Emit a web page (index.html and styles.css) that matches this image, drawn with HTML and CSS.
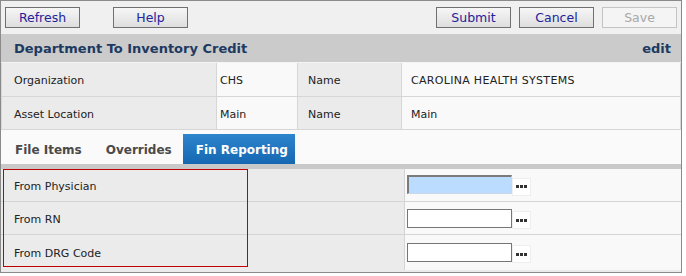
FILE: index.html
```html
<!DOCTYPE html>
<html>
	<head>
		<meta charset="utf-8">
		<title>Department To Inventory Credit</title>
		<link rel="stylesheet" href="styles.css">
	</head>
	<body>
		<div id="frame">
			<div class="toolbar">
				<button class="btn">Refresh</button>
				<button class="btn help">Help</button>
				<span class="spacer"></span>
				<button class="btn">Submit</button>
				<button class="btn">Cancel</button>
				<button class="btn" disabled>Save</button>
			</div>
			<div class="header">
				<span class="title">Department To Inventory Credit</span>
				<span class="edit">edit</span>
			</div>
			<table class="info">
				<tr>
					<td class="lbl c1">Organization</td>
					<td class="val c2">CHS</td>
					<td class="lbl c3">Name</td>
					<td class="val caps">CAROLINA HEALTH SYSTEMS</td>
				</tr>
				<tr>
					<td class="lbl c1">Asset Location</td>
					<td class="val c2">Main</td>
					<td class="lbl c3">Name</td>
					<td class="val">Main</td>
				</tr>
			</table>
			<div class="tabs">
				<a class="tab">File Items</a>
				<a class="tab">Overrides</a>
				<a class="tab active">Fin Reporting</a>
			</div>
			<div class="fields">
				<table class="grid">
					<tr>
						<td class="lbl">From Physician</td>
						<td class="val"><input type="text" class="focus"><span class="more"><i></i><i></i><i></i></span></td>
					</tr>
					<tr>
						<td class="lbl">From RN</td>
						<td class="val"><input type="text"><span class="more"><i></i><i></i><i></i></span></td>
					</tr>
					<tr>
						<td class="lbl">From DRG Code</td>
						<td class="val"><input type="text"><span class="more"><i></i><i></i><i></i></span></td>
					</tr>
				</table>
				<div class="mark"></div>
			</div>
		</div>
	</body>
</html>
```
FILE: styles.css
```css
* {
	margin: 0;
	padding: 0;
	box-sizing: border-box;
}
body {
	background: #fff;
	font-family: "DejaVu Sans", Verdana, sans-serif;
	font-size: 11px;
	color: #222;
}
#frame {
	width: 682px;
	height: 273px;
	border: 1px solid #8a8a8a;
	background: #ebebeb;
}
.toolbar {
	height: 33px;
	background: #f0f0f0;
	display: flex;
	align-items: flex-start;
	padding: 6px 4px 0 4px;
	gap: 8px;
}
.btn {
	width: 75px;
	height: 21px;
	border: 1px solid #707070;
	background: linear-gradient(#f6f6f6, #dedede);
	font-family: "DejaVu Sans", Verdana, sans-serif;
	font-size: 12.5px;
	color: #23239a;
}
.btn.help {
	margin-left: 25px;
}
.btn:disabled {
	border-color: #c4c4c4;
	background: #f4f4f4;
	color: #a8a8a8;
}
.spacer {
	flex: 1;
}
.header {
	height: 29px;
	background: #cacbca;
	display: flex;
	align-items: center;
	justify-content: space-between;
	padding: 1px 10px 0 13px;
	font-weight: bold;
	font-size: 13px;
	color: #1d3a62;
	border-bottom: 1px solid #f4f4f4;
}
.info,
.grid {
	width: 680px;
	border-collapse: collapse;
	table-layout: fixed;
}
.info td {
	height: 33px;
	border: 1px solid #d6d6d6;
	padding: 3px 0 0 12px;
	vertical-align: middle;
}
.info tr:first-child td {
	border-top: 0;
}
.lbl {
	background: #ebebeb;
}
.val {
	background: #f9f9f9;
}
.info .c1 {
	width: 215px;
}
.info .c2 {
	width: 81px;
	padding-left: 3px;
}
.info .c3 {
	width: 104px;
	padding-left: 10px;
}
.info .val:last-child {
	padding-left: 9px;
}
.caps {
	letter-spacing: 0.3px;
}
.tabs {
	height: 34px;
	background: #fafafa;
	display: flex;
	align-items: flex-end;
	padding-left: 2px;
}
.tab {
	height: 30px;
	line-height: 32px;
	padding: 0 12px;
	font-size: 12px;
	font-weight: bold;
	color: #4a4a4a;
	white-space: nowrap;
}
.tab.active {
	width: 112px;
	margin-left: -1px;
	padding: 0 0 0 13px;
	background: linear-gradient(#2d85cd, #1567b1);
	color: #fff;
}
.fields {
	position: relative;
	border-top: 5px solid #c9c9c9;
}
.grid td {
	height: 33px;
	border-bottom: 1px solid #d4d4d4;
	vertical-align: middle;
}
.grid tr:last-child td {
	border-bottom: 0;
	height: 35px;
}
.grid .lbl {
	width: 403px;
	padding: 3px 0 0 13px;
	border-right: 1px solid #d4d4d4;
}
.grid .val {
	padding-left: 2px;
}
.grid input {
	width: 105px;
	height: 19px;
	border: 1px solid #767676;
	background: #fff;
	vertical-align: middle;
}
.grid input.focus {
	background: #bbdcfe;
	border-color: #7a7a7a #c8d8e8 #c8d8e8 #7a7a7a;
	border-width: 2px 1px 1px 2px;
}
.more {
	display: inline-flex;
	align-items: center;
	justify-content: center;
	gap: 1px;
	width: 19px;
	height: 18px;
	margin-top: 4px;
	background: #fff;
	border: 1px solid #eeeeee;
	vertical-align: middle;
}
.more i {
	width: 3px;
	height: 3px;
	background: #333;
}
.mark {
	position: absolute;
	left: 2px;
	top: 0;
	width: 245px;
	height: 98px;
	border: 1px solid #c00000;
}
```
